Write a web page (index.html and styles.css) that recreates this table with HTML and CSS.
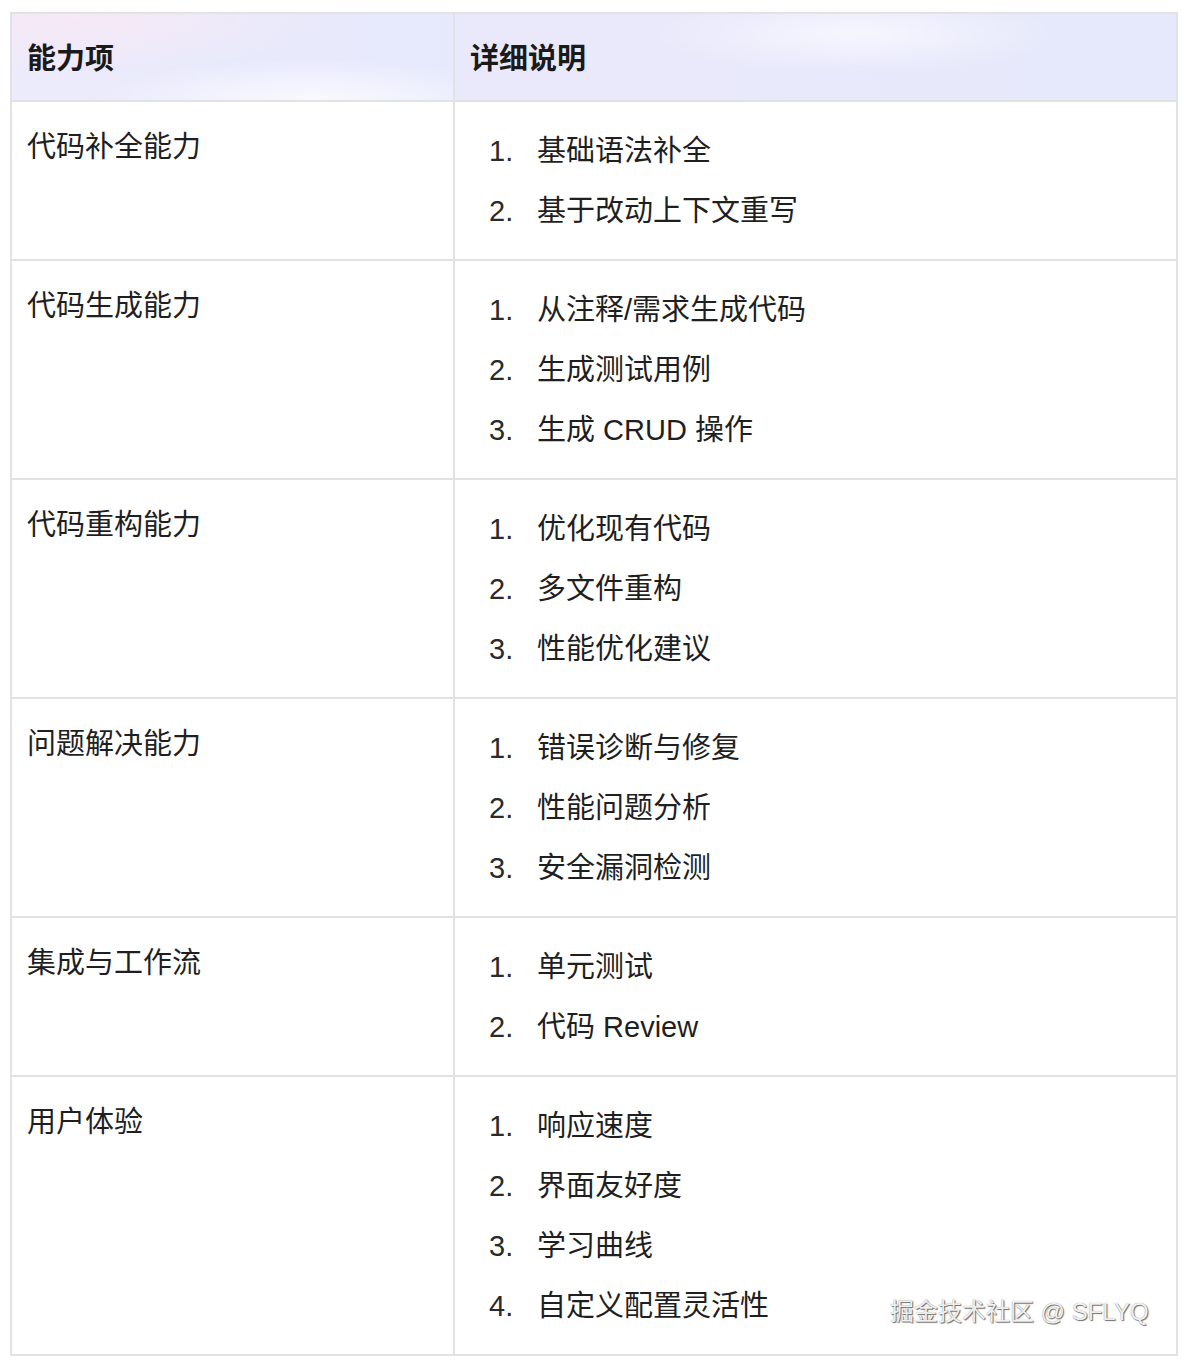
FILE: index.html
```html
<!DOCTYPE html>
<html lang="zh-CN">
<head>
<meta charset="utf-8">
<title>能力项</title>
<link rel="stylesheet" href="styles.css">
</head>
<body>
<div class="page">
  <table class="cap-table">
    <colgroup>
      <col class="col-name">
      <col class="col-desc">
    </colgroup>
    <thead>
      <tr>
        <th>能力项</th>
        <th>详细说明</th>
      </tr>
    </thead>
    <tbody>
      <tr>
        <td class="name">代码补全能力</td>
        <td><ol class="items"><li>基础语法补全</li><li>基于改动上下文重写</li></ol></td>
      </tr>
      <tr>
        <td class="name">代码生成能力</td>
        <td><ol class="items"><li>从注释/需求生成代码</li><li>生成测试用例</li><li>生成 CRUD 操作</li></ol></td>
      </tr>
      <tr>
        <td class="name">代码重构能力</td>
        <td><ol class="items"><li>优化现有代码</li><li>多文件重构</li><li>性能优化建议</li></ol></td>
      </tr>
      <tr>
        <td class="name">问题解决能力</td>
        <td><ol class="items"><li>错误诊断与修复</li><li>性能问题分析</li><li>安全漏洞检测</li></ol></td>
      </tr>
      <tr>
        <td class="name">集成与工作流</td>
        <td><ol class="items"><li>单元测试</li><li>代码 Review</li></ol></td>
      </tr>
      <tr>
        <td class="name">用户体验</td>
        <td><ol class="items"><li>响应速度</li><li>界面友好度</li><li>学习曲线</li><li>自定义配置灵活性</li></ol></td>
      </tr>
    </tbody>
  </table>
  <div class="watermark">掘金技术社区 @ SFLYQ</div>
</div>
</body>
</html>
```

FILE: styles.css
```css
html, body {
  margin: 0;
  padding: 0;
  background: #ffffff;
}

body {
  font-family: "Liberation Sans", "Noto Sans CJK SC", sans-serif;
  color: #1f1f1f;
}

.page {
  position: relative;
  padding: 12px 8px 6px 10px;
}

.cap-table {
  width: 1166px;
  border-collapse: collapse;
  table-layout: fixed;
  border: 2px solid #e2e2e2;
}

.col-name { width: 443px; }
.col-desc { width: 723px; }

.cap-table th,
.cap-table td {
  border: 2px solid #e2e2e2;
  vertical-align: top;
  text-align: left;
  font-size: 29px;
}

.cap-table th {
  padding: 17px 15px 13px 15px;
  line-height: 56px;
  font-weight: 700;
  color: #1a1a1a;
  background:
    radial-gradient(ellipse 220px 40px at 300px 85px, rgba(255,255,255,0.75), rgba(255,255,255,0)),
    radial-gradient(ellipse 260px 60px at 60px 0px, rgba(250,232,244,0.8), rgba(250,232,244,0)),
    linear-gradient(90deg, #ecebfb 0%, #e8eafb 50%, #e6e9fb 100%);
}

.cap-table th + th {
  background:
    radial-gradient(ellipse 200px 40px at 400px 20px, rgba(255,255,255,0.6), rgba(255,255,255,0)),
    linear-gradient(90deg, #eae9fb 0%, #e7e9fb 60%, #e5e9fb 100%);
}

.cap-table td {
  padding: 16px 16px;
  line-height: 56px;
}

.cap-table td.name {
  padding-left: 15px;
  padding-top: 17px;
}

.items {
  list-style: none;
  margin: 0;
  padding: 3px 0 2px 0;
  counter-reset: item;
}

.items li {
  counter-increment: item;
  display: flex;
  line-height: 60px;
}

.items li::before {
  content: counter(item) ".";
  flex: 0 0 48px;
  padding-left: 18px;
  color: #2a2a2a;
}

.watermark {
  position: absolute;
  left: 890px;
  top: 1295px;
  font-size: 24px;
  line-height: 34px;
  color: rgba(255, 255, 255, 0.92);
  text-shadow: 1px 1px 1px rgba(0, 0, 0, 0.55), 0 0 1px rgba(0, 0, 0, 0.5);
  white-space: nowrap;
}
```
